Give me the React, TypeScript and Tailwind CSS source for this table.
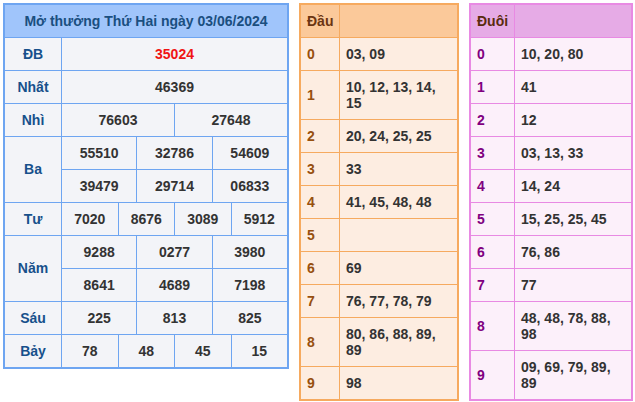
import React from 'react';

type Prize = { label: string; rows: string[][]; special?: boolean };

const prizes: Prize[] = [
    { label: 'ĐB', rows: [['35024']], special: true },
    { label: 'Nhất', rows: [['46369']] },
    { label: 'Nhì', rows: [['76603', '27648']] },
    { label: 'Ba', rows: [['55510', '32786', '54609'], ['39479', '29714', '06833']] },
    { label: 'Tư', rows: [['7020', '8676', '3089', '5912']] },
    { label: 'Năm', rows: [['9288', '0277', '3980'], ['8641', '4689', '7198']] },
    { label: 'Sáu', rows: [['225', '813', '825']] },
    { label: 'Bảy', rows: [['78', '48', '45', '15']] },
];

const dau: [string, string][] = [
    ['0', '03, 09'],
    ['1', '10, 12, 13, 14, 15'],
    ['2', '20, 24, 25, 25'],
    ['3', '33'],
    ['4', '41, 45, 48, 48'],
    ['5', ''],
    ['6', '69'],
    ['7', '76, 77, 78, 79'],
    ['8', '80, 86, 88, 89, 89'],
    ['9', '98'],
];

const duoi: [string, string][] = [
    ['0', '10, 20, 80'],
    ['1', '41'],
    ['2', '12'],
    ['3', '03, 13, 33'],
    ['4', '14, 24'],
    ['5', '15, 25, 25, 45'],
    ['6', '76, 86'],
    ['7', '77'],
    ['8', '48, 48, 78, 88, 98'],
    ['9', '09, 69, 79, 89, 89'],
];

const ResultTable: React.FC = () => (
    <div className="w-[286px] shrink-0 border-2 border-[#6ea5f1] bg-[#f3f4f8]">
        {/* Title */}
        <div className="h-[32px] flex items-center justify-center bg-[#a0c5fb] text-[14px] font-bold text-[#1a4f80]">
            Mở thưởng Thứ Hai ngày 03/06/2024
        </div>

        {prizes.map((p) => (
            <div key={p.label} className="flex border-t border-[#6ea5f1]">
                <div className="w-[57px] shrink-0 flex items-center justify-center border-r border-[#6ea5f1] text-[14px] font-bold text-[#17508b]">
                    {p.label}
                </div>
                <div className="flex-1 flex flex-col">
                    {p.rows.map((row, i) => (
                        <div
                            key={i}
                            className={i > 0 ? 'flex h-[33px] border-t border-[#6ea5f1]' : 'flex h-[32px]'}
                        >
                            {row.map((v, j) => (
                                <div
                                    key={j}
                                    className={`flex-1 flex items-center justify-center text-[14px] font-bold ${
                                        p.special ? 'text-[#f01414]' : 'text-[#333333]'
                                    } ${j > 0 ? 'border-l border-[#6ea5f1]' : ''}`}
                                >
                                    {v}
                                </div>
                            ))}
                        </div>
                    ))}
                </div>
            </div>
        ))}
    </div>
);

const DauTable: React.FC = () => (
    <div className="w-[160px] shrink-0 border-2 border-[#f6aa5f] bg-[#fdede1]">
        <div className="flex h-[32px] bg-[#fbc99a]">
            <div className="w-[39px] shrink-0 flex items-center px-1.5 border-r border-[#f6aa5f] text-[14px] font-bold text-[#6b3512]">
                Đầu
            </div>
            <div className="flex-1" />
        </div>
        {dau.map(([k, v]) => (
            <div key={k} className="flex border-t border-[#f6aa5f]">
                <div className="w-[39px] shrink-0 flex items-center px-1.5 border-r border-[#f6aa5f] text-[14px] font-bold text-[#97500f]">
                    {k}
                </div>
                <div className="flex-1 min-h-[32px] flex items-center px-1.5 py-2 text-[14px] leading-4 font-bold text-[#333333]">
                    {v}
                </div>
            </div>
        ))}
    </div>
);

const DuoiTable: React.FC = () => (
    <div className="w-[164px] shrink-0 border-2 border-[#e88ae3] bg-[#fcf0fa]">
        <div className="flex h-[32px] bg-[#e6abe6]">
            <div className="w-[44px] shrink-0 flex items-center px-1.5 border-r border-[#e88ae3] text-[14px] font-bold text-[#5a2c0e]">
                Đuôi
            </div>
            <div className="flex-1" />
        </div>
        {duoi.map(([k, v]) => (
            <div key={k} className="flex border-t border-[#e88ae3]">
                <div className="w-[44px] shrink-0 flex items-center px-1.5 border-r border-[#e88ae3] text-[14px] font-bold text-[#800080]">
                    {k}
                </div>
                <div className="flex-1 min-h-[32px] flex items-center px-1.5 py-2 text-[14px] leading-4 font-bold text-[#333333]">
                    {v}
                </div>
            </div>
        ))}
    </div>
);

const App: React.FC = () => {
    return (
        <div className="w-[635px] h-[402px] bg-white p-[3px] flex items-start gap-[10px] font-['Liberation_Sans',Arial,sans-serif]">
            <ResultTable />
            <DauTable />
            <DuoiTable />
        </div>
    );
};

export default App;
